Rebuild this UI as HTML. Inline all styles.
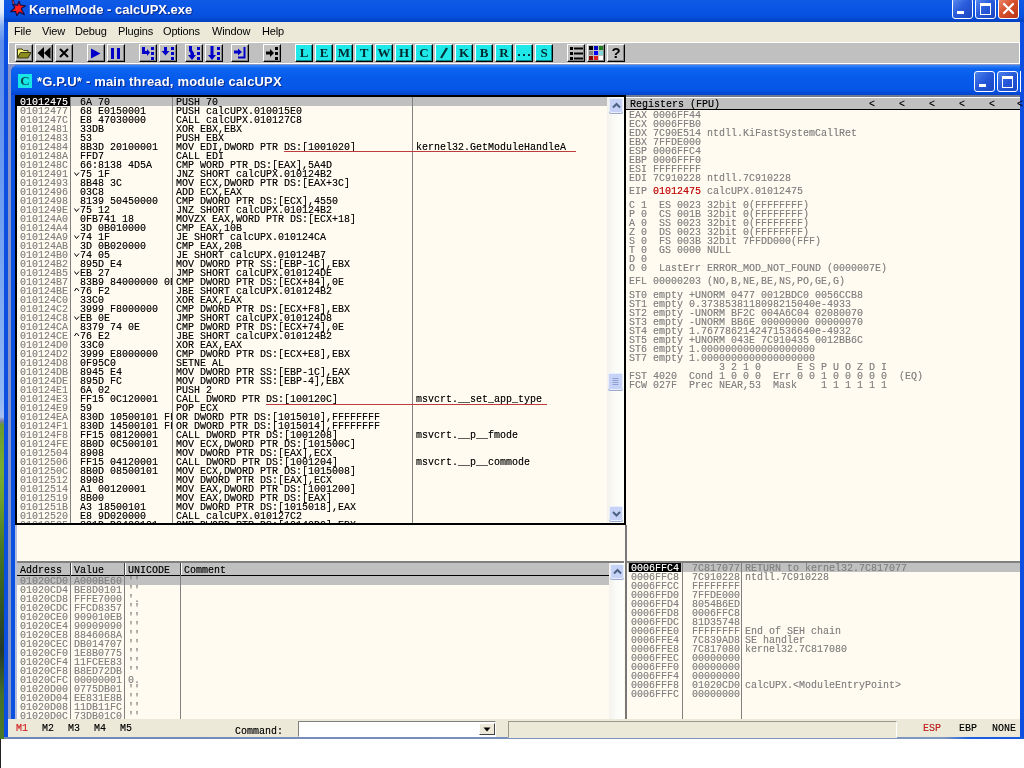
<!DOCTYPE html>
<html><head><meta charset="utf-8"><title>KernelMode - calcUPX.exe</title>
<style>
html,body{margin:0;padding:0;}
body{width:1024px;height:768px;overflow:hidden;position:relative;background:#fff;font-family:"Liberation Sans",sans-serif;}
.a{position:absolute;}
.m{position:absolute;margin-top:1px;font-family:"Liberation Mono",monospace;font-size:10px;line-height:9px;height:9px;white-space:pre;color:#000;letter-spacing:0;text-shadow:0 0 0 rgba(0,0,0,.45);}
.g{color:#808080;text-shadow:0 0 0 rgba(128,128,128,.45);}
.pane{position:absolute;background:#fffbf0;overflow:hidden;}
.tb{position:absolute;top:44px;width:16px;height:16px;background:#c0c0c0;border:1px solid;border-color:#fff #000 #000 #fff;box-shadow:inset -1px -1px 0 #808080;}
.cb{position:absolute;top:44px;width:16px;height:16px;background:#1ee8e8;border:1px solid;border-color:#fff #000 #000 #fff;box-shadow:inset -1px -1px 0 #0a8a8a;font-family:"Liberation Serif",serif;font-weight:bold;font-size:13px;line-height:16px;text-align:center;color:#00282e;}
.menu{position:absolute;top:25px;font-size:11px;line-height:13px;color:#000;letter-spacing:-0.15px;}
.sb{position:absolute;width:17px;background:linear-gradient(90deg,#f3f2ec 0%,#fbfbf8 50%,#fefefc 100%);}
.sbb{position:absolute;box-sizing:border-box;left:2px;width:14px;height:15px;background:#c6d3f7;border:1px solid #e8eefc;border-radius:2px;box-shadow:0 1px 0 #9aa9cf;}
.xb{position:absolute;width:19px;height:19px;border:1px solid #fff;border-radius:3px;background:linear-gradient(135deg,#4d83ec 0%,#2456d8 50%,#1b48c4 100%);}
b{font-weight:normal;color:#c00808;text-shadow:0 0 0 rgba(192,8,8,.6);}
</style></head><body><div id="root" style="position:absolute;left:0;top:0;width:1024px;height:768px;will-change:transform;">

<div class="a" style="left:0;top:0;width:4px;height:739px;background:linear-gradient(180deg,#eef3fb 0px,#e2ebfa 12px,#86aef2 26px,#5c8cec 42px,#6a9af0 180px,#92b8f4 400px,#a6bef0 417px,#7a7cac 421px,#6a9a30 425px,#78ae30 470px,#6fa02c 500px,#4a7a24 545px,#355a20 600px,#24382a 650px,#44702a 695px,#4a7a28 739px);"></div>
<div class="a" style="left:1px;top:739px;width:1023px;height:29px;background:#fff;"></div>
<div class="a" style="left:0;top:739px;width:1px;height:29px;background:#222;"></div>
<div class="a" style="left:4px;top:0;width:1020px;height:739px;background:#0c4fe0;"></div>
<div class="a" style="left:4px;top:0;width:1020px;height:22px;background:linear-gradient(180deg,#0f5ae6 0%,#0a55e4 40%,#0650dd 75%,#0340c0 100%);"></div>
<svg class="a" style="left:8px;top:0" width="20" height="18" viewBox="8 0 20 18"><g stroke="#16104a" stroke-width="1.2" stroke-linejoin="round"><path d="M19 1.2 L20.4 5 L25.6 5.8 L21.2 8.5 L24.3 14.6 L19.5 12.2 L16.8 15.6 L15.6 11.6 L10.4 11.6 L14.8 7.8 L13 4.6 L17.4 5.2 Z" fill="#ee1a1a"/><path d="M12.8 0.8 L13.6 3.8" stroke-width="2.2" stroke-linecap="round"/></g><path d="M12.9 1 L13.5 3.6" stroke="#e04050" stroke-width="1" stroke-linecap="round"/><circle cx="18" cy="8.5" r="2.6" fill="#ff2222"/></svg>
<div class="a" style="left:29px;top:2px;font-weight:bold;font-size:13px;line-height:16px;color:#fff;text-shadow:1px 1px 0 #0a2a8a;white-space:pre;">KernelMode - calcUPX.exe</div>
<div class="xb" style="left:952px;top:-2px;background:linear-gradient(135deg,#5a8cf0 0%,#2a5cdc 45%,#1a44c0 100%);">
<div class="a" style="left:4px;top:12px;width:7px;height:3px;background:#fff;"></div>
</div>
<div class="xb" style="left:975px;top:-2px;background:linear-gradient(135deg,#5a8cf0 0%,#2a5cdc 45%,#1a44c0 100%);">
<div class="a" style="left:4px;top:4px;width:9px;height:8px;border:1px solid #fff;border-top-width:3px;box-sizing:content-box;"></div>
</div>
<div class="xb" style="left:998px;top:-2px;background:linear-gradient(135deg,#e88a6a 0%,#d8502c 45%,#b8351a 100%);">
<svg class="a" style="left:3px;top:3px" width="13" height="13" viewBox="0 0 13 13"><path d="M2 2 L11 11 M11 2 L2 11" stroke="#fff" stroke-width="2.2" stroke-linecap="round"/></svg>
</div>
<div class="a" style="left:8px;top:22px;width:1012px;height:20px;background:#ece9d8;"></div>
<div class="menu" style="left:14px;">File</div>
<div class="menu" style="left:42px;">View</div>
<div class="menu" style="left:75px;">Debug</div>
<div class="menu" style="left:118px;">Plugins</div>
<div class="menu" style="left:163px;">Options</div>
<div class="menu" style="left:212px;">Window</div>
<div class="menu" style="left:262px;">Help</div>
<div class="a" style="left:8px;top:42px;width:1012px;height:22px;background:#fff;"></div>
<div class="a" style="left:9px;top:43px;width:1010px;height:20px;background:#c0c0c0;"></div>
<div class="tb" style="left:15px;"><svg class="a" style="left:0;top:0" width="16" height="16" viewBox="0 0 16 16"><path d="M1.5 13 V4 H6 L7.5 5.5 H12 V7" fill="#f6f07a" stroke="#3a3a10" stroke-width="1"/><path d="M1.5 13 L4.5 7.5 H15 L12 13 Z" fill="#8c8c1e" stroke="#3a3a10" stroke-width="1"/></svg></div>
<div class="tb" style="left:35px;"><svg class="a" style="left:0;top:0" width="16" height="16" viewBox="0 0 16 16"><path d="M8 2 V14 L1.5 8 Z M14.5 2 V14 L8 8 Z" fill="#000"/></svg></div>
<div class="tb" style="left:55px;"><svg class="a" style="left:0;top:0" width="16" height="16" viewBox="0 0 16 16"><path d="M4 4 L12 12 M12 4 L4 12" stroke="#000" stroke-width="2"/></svg></div>
<div class="tb" style="left:87px;"><svg class="a" style="left:0;top:0" width="16" height="16" viewBox="0 0 16 16"><path d="M3 3.5 L12.5 8.5 L3 13.5 Z" fill="#0000c8"/></svg></div>
<div class="tb" style="left:107px;"><svg class="a" style="left:0;top:0" width="16" height="16" viewBox="0 0 16 16"><rect x="3" y="3" width="3" height="11" fill="#0000c8"/><rect x="9" y="3" width="3" height="11" fill="#0000c8"/></svg></div>
<div class="tb" style="left:139px;"><svg class="a" style="left:0;top:0" width="16" height="16" viewBox="0 0 16 16"><path d="M2 2 H5 V6 H7 V4 L10 7.5 L7 11 V9 H2 Z" fill="#0000c8"/><rect x="11" y="2" width="3" height="3" fill="#0000c8"/><rect x="11" y="7" width="3" height="3" fill="#0000c8"/><rect x="11" y="12" width="3" height="3" fill="#0000c8"/></svg></div>
<div class="tb" style="left:159px;"><svg class="a" style="left:0;top:0" width="16" height="16" viewBox="0 0 16 16"><path d="M4 2 H7 V6 H9.5 L5.5 10.5 L1.5 6 H4 Z" fill="#0000c8"/><rect x="11" y="2" width="3" height="3" fill="#0000c8"/><rect x="11" y="7" width="3" height="3" fill="#0000c8"/><rect x="11" y="12" width="3" height="3" fill="#0000c8"/></svg></div>
<div class="tb" style="left:185px;"><svg class="a" style="left:0;top:0" width="16" height="16" viewBox="0 0 16 16"><path d="M3 1 H6 V5 L8 8 V10 H10 L6 15 L2 10 H4.5 V8 L3 6 Z" fill="#0000c8"/><rect x="11" y="2" width="3" height="3" fill="#0000c8"/><rect x="11" y="7" width="3" height="3" fill="#0000c8"/><rect x="11" y="12" width="3" height="3" fill="#0000c8"/></svg></div>
<div class="tb" style="left:205px;"><svg class="a" style="left:0;top:0" width="16" height="16" viewBox="0 0 16 16"><path d="M4.5 1 H7.5 V10 H10 L6 15 L2 10 H4.5 Z" fill="#0000c8"/><rect x="11" y="2" width="3" height="3" fill="#0000c8"/><rect x="11" y="7" width="3" height="3" fill="#0000c8"/><rect x="11" y="12" width="3" height="3" fill="#0000c8"/></svg></div>
<div class="tb" style="left:231px;"><svg class="a" style="left:0;top:0" width="16" height="16" viewBox="0 0 16 16"><path d="M2 5.5 H6 V3.5 L10 7 L6 10.5 V8.5 H2 Z" fill="#0000c8"/><path d="M12.5 2 V12.5 H6" fill="none" stroke="#0000c8" stroke-width="2"/></svg></div>
<div class="tb" style="left:263px;"><svg class="a" style="left:0;top:0" width="16" height="16" viewBox="0 0 16 16"><path d="M2 6.5 H6 V4 L10 8 L6 12 V9.5 H2 Z" fill="#000"/><rect x="11" y="2" width="3" height="3" fill="#000"/><rect x="11" y="7" width="3" height="3" fill="#000"/><rect x="11" y="12" width="3" height="3" fill="#000"/></svg></div>
<div class="cb" style="left:295px;">L</div>
<div class="cb" style="left:315px;">E</div>
<div class="cb" style="left:335px;">M</div>
<div class="cb" style="left:355px;">T</div>
<div class="cb" style="left:375px;">W</div>
<div class="cb" style="left:395px;">H</div>
<div class="cb" style="left:415px;">C</div>
<div class="cb" style="left:435px;"><svg class="a" style="left:0;top:0" width="16" height="16"><path d="M5 13 L11 3" stroke="#00343a" stroke-width="2.2"/></svg></div>
<div class="cb" style="left:455px;">K</div>
<div class="cb" style="left:475px;">B</div>
<div class="cb" style="left:495px;">R</div>
<div class="cb" style="left:515px;"><svg class="a" style="left:0;top:0" width="16" height="16"><rect x="2" y="9" width="2" height="2" fill="#00343a"/><rect x="7" y="9" width="2" height="2" fill="#00343a"/><rect x="12" y="9" width="2" height="2" fill="#00343a"/></svg></div>
<div class="cb" style="left:535px;">S</div>
<div class="tb" style="left:567px;"><svg class="a" style="left:0;top:0" width="16" height="16" viewBox="0 0 16 16"><rect x="2" y="2" width="3" height="3" fill="#000"/><rect x="2" y="7" width="3" height="3" fill="#000"/><rect x="2" y="12" width="3" height="3" fill="#000"/><rect x="6" y="2.5" width="9" height="2" fill="#000"/><rect x="6" y="7.5" width="9" height="2" fill="#000"/><rect x="6" y="12.5" width="9" height="2" fill="#000"/></svg></div>
<div class="tb" style="left:587px;"><svg class="a" style="left:0;top:0" width="16" height="16" viewBox="0 0 16 16"><rect x="1" y="1" width="4" height="4" fill="#000"/><rect x="6" y="1" width="4" height="4" fill="#0000c0"/><rect x="11" y="1" width="4" height="4" fill="#208020"/><rect x="1" y="6" width="4" height="4" fill="#808080"/><rect x="6" y="6" width="4" height="4" fill="#0000ff"/><rect x="11" y="6" width="4" height="4" fill="#7fd8d8"/><rect x="1" y="11" width="4" height="4" fill="#800000"/><rect x="6" y="11" width="4" height="4" fill="#e02020"/><rect x="11" y="11" width="4" height="4" fill="#ffffff"/></svg></div>
<div class="tb" style="left:607px;font-weight:bold;font-size:15px;line-height:16px;text-align:center;color:#000;">?</div>
<div class="a" style="left:8px;top:64px;width:1012px;height:655px;background:#8a96c8;"></div>
<div class="a" style="left:11px;top:65px;width:1009px;height:654px;background:#0c50e0;border-radius:7px 0 0 0;"></div>
<div class="a" style="left:11px;top:65px;width:1009px;height:30px;border-radius:7px 0 0 0;background:linear-gradient(180deg,#3a88f8 0%,#0c64f0 12%,#065aea 50%,#0556e6 82%,#0344cc 100%);"></div>
<div class="a" style="left:18px;top:74px;width:14px;height:14px;background:#18e6e6;font-family:'Liberation Serif',serif;font-weight:bold;font-size:13px;line-height:14px;text-align:center;color:#064a52;">C</div>
<div class="a" style="left:37px;top:74px;font-weight:bold;font-size:13px;line-height:16px;letter-spacing:0.18px;color:#fff;text-shadow:1px 1px 0 #0a2a8a;white-space:pre;">*G.P.U* - main thread, module calcUPX</div>
<div class="xb" style="left:974px;top:71px;">
<div class="a" style="left:4px;top:12px;width:7px;height:3px;background:#fff;"></div>
</div>
<div class="xb" style="left:997px;top:71px;">
<div class="a" style="left:4px;top:4px;width:9px;height:8px;border:1px solid #fff;border-top-width:3px;"></div>
</div>
<div class="a" style="left:1020px;top:71px;width:1px;height:21px;background:#fff;"></div>
<div class="a" style="left:15px;top:95px;width:1005px;height:624px;background:#fffbf0;"></div>
<div class="a" style="left:15px;top:95px;width:611px;height:430px;background:#000;"></div>
<div class="pane" style="left:17px;top:97px;width:607px;height:426px;">
<div class="a" style="left:0;top:0;width:590px;height:9px;background:#c0c0c0;"></div>
<div class="a" style="left:0;top:0;width:53px;height:9px;background:#000;"></div>
<div class="a" style="left:53px;top:0;width:1px;height:426px;background:#808080;"></div>
<div class="a" style="left:155px;top:0;width:1px;height:426px;background:#808080;"></div>
<div class="a" style="left:395px;top:0;width:1px;height:426px;background:#808080;"></div>
<div class="m" style="left:3px;top:0px;color:#fff;text-shadow:0 0 0 rgba(255,255,255,.45);">01012475</div>
<div class="m" style="left:63px;top:0px;width:92px;overflow:hidden;">6A 70</div>
<div class="m" style="left:159px;top:0px;">PUSH 70</div>
<div class="m g" style="left:3px;top:9px;">01012477</div>
<div class="m" style="left:63px;top:9px;width:92px;overflow:hidden;">68 E0150001</div>
<div class="m" style="left:159px;top:9px;">PUSH calcUPX.010015E0</div>
<div class="m g" style="left:3px;top:18px;">0101247C</div>
<div class="m" style="left:63px;top:18px;width:92px;overflow:hidden;">E8 47030000</div>
<div class="m" style="left:159px;top:18px;">CALL calcUPX.010127C8</div>
<div class="m g" style="left:3px;top:27px;">01012481</div>
<div class="m" style="left:63px;top:27px;width:92px;overflow:hidden;">33DB</div>
<div class="m" style="left:159px;top:27px;">XOR EBX,EBX</div>
<div class="m g" style="left:3px;top:36px;">01012483</div>
<div class="m" style="left:63px;top:36px;width:92px;overflow:hidden;">53</div>
<div class="m" style="left:159px;top:36px;">PUSH EBX</div>
<div class="m g" style="left:3px;top:45px;">01012484</div>
<div class="m" style="left:63px;top:45px;width:92px;overflow:hidden;">8B3D 20100001</div>
<div class="m" style="left:159px;top:45px;">MOV EDI,DWORD PTR DS:[1001020]</div>
<div class="m" style="left:399px;top:45px;">kernel32.GetModuleHandleA</div>
<div class="m g" style="left:3px;top:54px;">0101248A</div>
<div class="m" style="left:63px;top:54px;width:92px;overflow:hidden;">FFD7</div>
<div class="m" style="left:159px;top:54px;">CALL EDI</div>
<div class="m g" style="left:3px;top:63px;">0101248C</div>
<div class="m" style="left:63px;top:63px;width:92px;overflow:hidden;">66:8138 4D5A</div>
<div class="m" style="left:159px;top:63px;">CMP WORD PTR DS:[EAX],5A4D</div>
<div class="m g" style="left:3px;top:72px;">01012491</div>
<svg class="a" style="left:57px;top:72px" width="6" height="9"><path d="M0.5 3.5 L2.5 6.5 L5 3.5" fill="none" stroke="#000" stroke-width="1"/></svg>
<div class="m" style="left:63px;top:72px;width:92px;overflow:hidden;">75 1F</div>
<div class="m" style="left:159px;top:72px;">JNZ SHORT calcUPX.010124B2</div>
<div class="m g" style="left:3px;top:81px;">01012493</div>
<div class="m" style="left:63px;top:81px;width:92px;overflow:hidden;">8B48 3C</div>
<div class="m" style="left:159px;top:81px;">MOV ECX,DWORD PTR DS:[EAX+3C]</div>
<div class="m g" style="left:3px;top:90px;">01012496</div>
<div class="m" style="left:63px;top:90px;width:92px;overflow:hidden;">03C8</div>
<div class="m" style="left:159px;top:90px;">ADD ECX,EAX</div>
<div class="m g" style="left:3px;top:99px;">01012498</div>
<div class="m" style="left:63px;top:99px;width:92px;overflow:hidden;">8139 50450000</div>
<div class="m" style="left:159px;top:99px;">CMP DWORD PTR DS:[ECX],4550</div>
<div class="m g" style="left:3px;top:108px;">0101249E</div>
<svg class="a" style="left:57px;top:108px" width="6" height="9"><path d="M0.5 3.5 L2.5 6.5 L5 3.5" fill="none" stroke="#000" stroke-width="1"/></svg>
<div class="m" style="left:63px;top:108px;width:92px;overflow:hidden;">75 12</div>
<div class="m" style="left:159px;top:108px;">JNZ SHORT calcUPX.010124B2</div>
<div class="m g" style="left:3px;top:117px;">010124A0</div>
<div class="m" style="left:63px;top:117px;width:92px;overflow:hidden;">0FB741 18</div>
<div class="m" style="left:159px;top:117px;">MOVZX EAX,WORD PTR DS:[ECX+18]</div>
<div class="m g" style="left:3px;top:126px;">010124A4</div>
<div class="m" style="left:63px;top:126px;width:92px;overflow:hidden;">3D 0B010000</div>
<div class="m" style="left:159px;top:126px;">CMP EAX,10B</div>
<div class="m g" style="left:3px;top:135px;">010124A9</div>
<svg class="a" style="left:57px;top:135px" width="6" height="9"><path d="M0.5 3.5 L2.5 6.5 L5 3.5" fill="none" stroke="#000" stroke-width="1"/></svg>
<div class="m" style="left:63px;top:135px;width:92px;overflow:hidden;">74 1F</div>
<div class="m" style="left:159px;top:135px;">JE SHORT calcUPX.010124CA</div>
<div class="m g" style="left:3px;top:144px;">010124AB</div>
<div class="m" style="left:63px;top:144px;width:92px;overflow:hidden;">3D 0B020000</div>
<div class="m" style="left:159px;top:144px;">CMP EAX,20B</div>
<div class="m g" style="left:3px;top:153px;">010124B0</div>
<svg class="a" style="left:57px;top:153px" width="6" height="9"><path d="M0.5 3.5 L2.5 6.5 L5 3.5" fill="none" stroke="#000" stroke-width="1"/></svg>
<div class="m" style="left:63px;top:153px;width:92px;overflow:hidden;">74 05</div>
<div class="m" style="left:159px;top:153px;">JE SHORT calcUPX.010124B7</div>
<div class="m g" style="left:3px;top:162px;">010124B2</div>
<div class="m" style="left:63px;top:162px;width:92px;overflow:hidden;">895D E4</div>
<div class="m" style="left:159px;top:162px;">MOV DWORD PTR SS:[EBP-1C],EBX</div>
<div class="m g" style="left:3px;top:171px;">010124B5</div>
<svg class="a" style="left:57px;top:171px" width="6" height="9"><path d="M0.5 3.5 L2.5 6.5 L5 3.5" fill="none" stroke="#000" stroke-width="1"/></svg>
<div class="m" style="left:63px;top:171px;width:92px;overflow:hidden;">EB 27</div>
<div class="m" style="left:159px;top:171px;">JMP SHORT calcUPX.010124DE</div>
<div class="m g" style="left:3px;top:180px;">010124B7</div>
<div class="m" style="left:63px;top:180px;width:92px;overflow:hidden;">83B9 84000000 0E</div>
<div class="m" style="left:159px;top:180px;">CMP DWORD PTR DS:[ECX+84],0E</div>
<div class="m g" style="left:3px;top:189px;">010124BE</div>
<svg class="a" style="left:57px;top:189px" width="6" height="9"><path d="M0.5 5 L2.5 2 L5 5" fill="none" stroke="#000" stroke-width="1"/></svg>
<div class="m" style="left:63px;top:189px;width:92px;overflow:hidden;">76 F2</div>
<div class="m" style="left:159px;top:189px;">JBE SHORT calcUPX.010124B2</div>
<div class="m g" style="left:3px;top:198px;">010124C0</div>
<div class="m" style="left:63px;top:198px;width:92px;overflow:hidden;">33C0</div>
<div class="m" style="left:159px;top:198px;">XOR EAX,EAX</div>
<div class="m g" style="left:3px;top:207px;">010124C2</div>
<div class="m" style="left:63px;top:207px;width:92px;overflow:hidden;">3999 F8000000</div>
<div class="m" style="left:159px;top:207px;">CMP DWORD PTR DS:[ECX+F8],EBX</div>
<div class="m g" style="left:3px;top:216px;">010124C8</div>
<svg class="a" style="left:57px;top:216px" width="6" height="9"><path d="M0.5 3.5 L2.5 6.5 L5 3.5" fill="none" stroke="#000" stroke-width="1"/></svg>
<div class="m" style="left:63px;top:216px;width:92px;overflow:hidden;">EB 0E</div>
<div class="m" style="left:159px;top:216px;">JMP SHORT calcUPX.010124D8</div>
<div class="m g" style="left:3px;top:225px;">010124CA</div>
<div class="m" style="left:63px;top:225px;width:92px;overflow:hidden;">8379 74 0E</div>
<div class="m" style="left:159px;top:225px;">CMP DWORD PTR DS:[ECX+74],0E</div>
<div class="m g" style="left:3px;top:234px;">010124CE</div>
<svg class="a" style="left:57px;top:234px" width="6" height="9"><path d="M0.5 5 L2.5 2 L5 5" fill="none" stroke="#000" stroke-width="1"/></svg>
<div class="m" style="left:63px;top:234px;width:92px;overflow:hidden;">76 E2</div>
<div class="m" style="left:159px;top:234px;">JBE SHORT calcUPX.010124B2</div>
<div class="m g" style="left:3px;top:243px;">010124D0</div>
<div class="m" style="left:63px;top:243px;width:92px;overflow:hidden;">33C0</div>
<div class="m" style="left:159px;top:243px;">XOR EAX,EAX</div>
<div class="m g" style="left:3px;top:252px;">010124D2</div>
<div class="m" style="left:63px;top:252px;width:92px;overflow:hidden;">3999 E8000000</div>
<div class="m" style="left:159px;top:252px;">CMP DWORD PTR DS:[ECX+E8],EBX</div>
<div class="m g" style="left:3px;top:261px;">010124D8</div>
<div class="m" style="left:63px;top:261px;width:92px;overflow:hidden;">0F95C0</div>
<div class="m" style="left:159px;top:261px;">SETNE AL</div>
<div class="m g" style="left:3px;top:270px;">010124DB</div>
<div class="m" style="left:63px;top:270px;width:92px;overflow:hidden;">8945 E4</div>
<div class="m" style="left:159px;top:270px;">MOV DWORD PTR SS:[EBP-1C],EAX</div>
<div class="m g" style="left:3px;top:279px;">010124DE</div>
<div class="m" style="left:63px;top:279px;width:92px;overflow:hidden;">895D FC</div>
<div class="m" style="left:159px;top:279px;">MOV DWORD PTR SS:[EBP-4],EBX</div>
<div class="m g" style="left:3px;top:288px;">010124E1</div>
<div class="m" style="left:63px;top:288px;width:92px;overflow:hidden;">6A 02</div>
<div class="m" style="left:159px;top:288px;">PUSH 2</div>
<div class="m g" style="left:3px;top:297px;">010124E3</div>
<div class="m" style="left:63px;top:297px;width:92px;overflow:hidden;">FF15 0C120001</div>
<div class="m" style="left:159px;top:297px;">CALL DWORD PTR DS:[100120C]</div>
<div class="m" style="left:399px;top:297px;">msvcrt.__set_app_type</div>
<div class="m g" style="left:3px;top:306px;">010124E9</div>
<div class="m" style="left:63px;top:306px;width:92px;overflow:hidden;">59</div>
<div class="m" style="left:159px;top:306px;">POP ECX</div>
<div class="m g" style="left:3px;top:315px;">010124EA</div>
<div class="m" style="left:63px;top:315px;width:92px;overflow:hidden;">830D 10500101 FF</div>
<div class="m" style="left:159px;top:315px;">OR DWORD PTR DS:[1015010],FFFFFFFF</div>
<div class="m g" style="left:3px;top:324px;">010124F1</div>
<div class="m" style="left:63px;top:324px;width:92px;overflow:hidden;">830D 14500101 FF</div>
<div class="m" style="left:159px;top:324px;">OR DWORD PTR DS:[1015014],FFFFFFFF</div>
<div class="m g" style="left:3px;top:333px;">010124F8</div>
<div class="m" style="left:63px;top:333px;width:92px;overflow:hidden;">FF15 08120001</div>
<div class="m" style="left:159px;top:333px;">CALL DWORD PTR DS:[1001208]</div>
<div class="m" style="left:399px;top:333px;">msvcrt.__p__fmode</div>
<div class="m g" style="left:3px;top:342px;">010124FE</div>
<div class="m" style="left:63px;top:342px;width:92px;overflow:hidden;">8B0D 0C500101</div>
<div class="m" style="left:159px;top:342px;">MOV ECX,DWORD PTR DS:[101500C]</div>
<div class="m g" style="left:3px;top:351px;">01012504</div>
<div class="m" style="left:63px;top:351px;width:92px;overflow:hidden;">8908</div>
<div class="m" style="left:159px;top:351px;">MOV DWORD PTR DS:[EAX],ECX</div>
<div class="m g" style="left:3px;top:360px;">01012506</div>
<div class="m" style="left:63px;top:360px;width:92px;overflow:hidden;">FF15 04120001</div>
<div class="m" style="left:159px;top:360px;">CALL DWORD PTR DS:[1001204]</div>
<div class="m" style="left:399px;top:360px;">msvcrt.__p__commode</div>
<div class="m g" style="left:3px;top:369px;">0101250C</div>
<div class="m" style="left:63px;top:369px;width:92px;overflow:hidden;">8B0D 08500101</div>
<div class="m" style="left:159px;top:369px;">MOV ECX,DWORD PTR DS:[1015008]</div>
<div class="m g" style="left:3px;top:378px;">01012512</div>
<div class="m" style="left:63px;top:378px;width:92px;overflow:hidden;">8908</div>
<div class="m" style="left:159px;top:378px;">MOV DWORD PTR DS:[EAX],ECX</div>
<div class="m g" style="left:3px;top:387px;">01012514</div>
<div class="m" style="left:63px;top:387px;width:92px;overflow:hidden;">A1 00120001</div>
<div class="m" style="left:159px;top:387px;">MOV EAX,DWORD PTR DS:[1001200]</div>
<div class="m g" style="left:3px;top:396px;">01012519</div>
<div class="m" style="left:63px;top:396px;width:92px;overflow:hidden;">8B00</div>
<div class="m" style="left:159px;top:396px;">MOV EAX,DWORD PTR DS:[EAX]</div>
<div class="m g" style="left:3px;top:405px;">0101251B</div>
<div class="m" style="left:63px;top:405px;width:92px;overflow:hidden;">A3 18500101</div>
<div class="m" style="left:159px;top:405px;">MOV DWORD PTR DS:[1015018],EAX</div>
<div class="m g" style="left:3px;top:414px;">01012520</div>
<div class="m" style="left:63px;top:414px;width:92px;overflow:hidden;">E8 9D020000</div>
<div class="m" style="left:159px;top:414px;">CALL calcUPX.010127C2</div>
<div class="m g" style="left:3px;top:423px;">01012525</div>
<div class="m" style="left:63px;top:423px;width:92px;overflow:hidden;">391D D0400101</div>
<div class="m" style="left:159px;top:423px;">CMP DWORD PTR DS:[10140D0],EBX</div>
<div class="a" style="left:267px;top:54px;width:292px;height:1px;background:#bc3c3c;"></div>
<div class="a" style="left:249px;top:307px;width:281px;height:1px;background:#bc3c3c;"></div>
<div class="sb" style="left:590px;top:0;height:426px;"></div>
<div class="sbb" style="left:592px;top:1px;"><svg class="a" style="left:0;top:0" width="13" height="14"><path d="M3 8.5 L6.5 5 L10 8.5" fill="none" stroke="#4d6185" stroke-width="2"/></svg></div>
<div class="sbb" style="left:592px;top:409px;"><svg class="a" style="left:0;top:0" width="13" height="14"><path d="M3 5 L6.5 8.5 L10 5" fill="none" stroke="#4d6185" stroke-width="2"/></svg></div>
<div class="sbb" style="left:591px;top:276px;width:15px;height:17px;"><svg class="a" style="left:0;top:0" width="13" height="16"><path d="M3.5 4.5 H9.5 M3.5 6.5 H9.5 M3.5 8.5 H9.5 M3.5 10.5 H9.5" stroke="#8ea0d6" stroke-width="1"/></svg></div>
</div>
<div class="a" style="left:15px;top:525px;width:2px;height:194px;background:#b4bedc;"></div>
<div class="a" style="left:17px;top:561px;width:607px;height:158px;background:#808080;"></div>
<div class="pane" style="left:17px;top:563px;width:607px;height:156px;">
<div class="a" style="left:0;top:0;width:592px;height:12px;background:#c0c0c0;"></div>
<div class="a" style="left:0;top:12px;width:592px;height:1px;background:#000;"></div>
<div class="a" style="left:0;top:13px;width:592px;height:9px;background:#c0c0c0;"></div>
<div class="a" style="left:53px;top:0;width:1px;height:156px;background:#808080;"></div>
<div class="a" style="left:53px;top:0;width:1px;height:12px;background:#404040;"></div>
<div class="a" style="left:54px;top:0;width:1px;height:12px;background:#fff;"></div>
<div class="a" style="left:107px;top:0;width:1px;height:156px;background:#808080;"></div>
<div class="a" style="left:107px;top:0;width:1px;height:12px;background:#404040;"></div>
<div class="a" style="left:108px;top:0;width:1px;height:12px;background:#fff;"></div>
<div class="a" style="left:163px;top:0;width:1px;height:156px;background:#808080;"></div>
<div class="a" style="left:163px;top:0;width:1px;height:12px;background:#404040;"></div>
<div class="a" style="left:164px;top:0;width:1px;height:12px;background:#fff;"></div>
<div class="m" style="left:3px;top:2px;">Address</div>
<div class="m" style="left:57px;top:2px;">Value</div>
<div class="m" style="left:111px;top:2px;">UNICODE</div>
<div class="m" style="left:167px;top:2px;">Comment</div>
<div class="m g" style="left:3px;top:13px;">01020CD0</div>
<div class="m g" style="left:57px;top:13px;">A000BE60</div>
<div class="m g" style="left:111px;top:13px;">&#x27;&#x27;</div>
<div class="m g" style="left:3px;top:22px;">01020CD4</div>
<div class="m g" style="left:57px;top:22px;">BE8D0101</div>
<div class="m g" style="left:111px;top:22px;">&#x27;&#x27;</div>
<div class="m g" style="left:3px;top:31px;">01020CD8</div>
<div class="m g" style="left:57px;top:31px;">FFFE7000</div>
<div class="m g" style="left:111px;top:31px;">&#x27;.</div>
<div class="m g" style="left:3px;top:40px;">01020CDC</div>
<div class="m g" style="left:57px;top:40px;">FFCD8357</div>
<div class="m g" style="left:111px;top:40px;">&#x27;&#x27;</div>
<div class="m g" style="left:3px;top:49px;">01020CE0</div>
<div class="m g" style="left:57px;top:49px;">909010EB</div>
<div class="m g" style="left:111px;top:49px;">&#x27;&#x27;</div>
<div class="m g" style="left:3px;top:58px;">01020CE4</div>
<div class="m g" style="left:57px;top:58px;">90909090</div>
<div class="m g" style="left:111px;top:58px;">&#x27;&#x27;</div>
<div class="m g" style="left:3px;top:67px;">01020CE8</div>
<div class="m g" style="left:57px;top:67px;">8846068A</div>
<div class="m g" style="left:111px;top:67px;">&#x27;&#x27;</div>
<div class="m g" style="left:3px;top:76px;">01020CEC</div>
<div class="m g" style="left:57px;top:76px;">DB014707</div>
<div class="m g" style="left:111px;top:76px;">&#x27;&#x27;</div>
<div class="m g" style="left:3px;top:85px;">01020CF0</div>
<div class="m g" style="left:57px;top:85px;">1E8B0775</div>
<div class="m g" style="left:111px;top:85px;">&#x27;&#x27;</div>
<div class="m g" style="left:3px;top:94px;">01020CF4</div>
<div class="m g" style="left:57px;top:94px;">11FCEE83</div>
<div class="m g" style="left:111px;top:94px;">&#x27;&#x27;</div>
<div class="m g" style="left:3px;top:103px;">01020CF8</div>
<div class="m g" style="left:57px;top:103px;">B8ED72DB</div>
<div class="m g" style="left:111px;top:103px;">&#x27;&#x27;</div>
<div class="m g" style="left:3px;top:112px;">01020CFC</div>
<div class="m g" style="left:57px;top:112px;">00000001</div>
<div class="m g" style="left:111px;top:112px;">0.</div>
<div class="m g" style="left:3px;top:121px;">01020D00</div>
<div class="m g" style="left:57px;top:121px;">0775DB01</div>
<div class="m g" style="left:111px;top:121px;">&#x27;&#x27;</div>
<div class="m g" style="left:3px;top:130px;">01020D04</div>
<div class="m g" style="left:57px;top:130px;">EE831E8B</div>
<div class="m g" style="left:111px;top:130px;">&#x27;&#x27;</div>
<div class="m g" style="left:3px;top:139px;">01020D08</div>
<div class="m g" style="left:57px;top:139px;">11DB11FC</div>
<div class="m g" style="left:111px;top:139px;">&#x27;&#x27;</div>
<div class="m g" style="left:3px;top:148px;">01020D0C</div>
<div class="m g" style="left:57px;top:148px;">73DB01C0</div>
<div class="m g" style="left:111px;top:148px;">&#x27;&#x27;</div>
<div class="sb" style="left:592px;top:0;width:15px;height:156px;"></div>
<div class="sbb" style="left:593px;top:1px;"><svg class="a" style="left:0;top:0" width="13" height="14"><path d="M3 8.5 L6.5 5 L10 8.5" fill="none" stroke="#4d6185" stroke-width="2"/></svg></div>
</div>
<div class="a" style="left:626px;top:95px;width:394px;height:2px;background:#707890;"></div>
<div class="a" style="left:626px;top:97px;width:394px;height:1px;background:#fff;"></div>
<div class="a" style="left:626px;top:98px;width:394px;height:11px;background:#c0c0c0;"></div>
<div class="a" style="left:626px;top:109px;width:394px;height:1px;background:#000;"></div>
<div class="m" style="left:630px;top:99px;">Registers (FPU)</div>
<div class="m" style="left:869px;top:99px;">&lt;</div>
<div class="m" style="left:899px;top:99px;">&lt;</div>
<div class="m" style="left:929px;top:99px;">&lt;</div>
<div class="m" style="left:959px;top:99px;">&lt;</div>
<div class="m" style="left:989px;top:99px;">&lt;</div>
<div class="m" style="left:1017px;top:99px;">&lt;</div>
<div class="m g" style="left:629px;top:110px;">EAX 0006FF44</div>
<div class="m g" style="left:629px;top:119px;">ECX 0006FFB0</div>
<div class="m g" style="left:629px;top:128px;">EDX 7C90E514 ntdll.KiFastSystemCallRet</div>
<div class="m g" style="left:629px;top:137px;">EBX 7FFDE000</div>
<div class="m g" style="left:629px;top:146px;">ESP 0006FFC4</div>
<div class="m g" style="left:629px;top:155px;">EBP 0006FFF0</div>
<div class="m g" style="left:629px;top:164px;">ESI FFFFFFFF</div>
<div class="m g" style="left:629px;top:173px;">EDI 7C910228 ntdll.7C910228</div>
<div class="m g" style="left:629px;top:186px;">EIP <b>01012475</b> calcUPX.01012475</div>
<div class="m g" style="left:629px;top:200px;">C 1  ES 0023 32bit 0(FFFFFFFF)</div>
<div class="m g" style="left:629px;top:209px;">P 0  CS 001B 32bit 0(FFFFFFFF)</div>
<div class="m g" style="left:629px;top:218px;">A 0  SS 0023 32bit 0(FFFFFFFF)</div>
<div class="m g" style="left:629px;top:227px;">Z 0  DS 0023 32bit 0(FFFFFFFF)</div>
<div class="m g" style="left:629px;top:236px;">S 0  FS 003B 32bit 7FFDD000(FFF)</div>
<div class="m g" style="left:629px;top:245px;">T 0  GS 0000 NULL</div>
<div class="m g" style="left:629px;top:254px;">D 0</div>
<div class="m g" style="left:629px;top:263px;">O 0  LastErr ERROR_MOD_NOT_FOUND (0000007E)</div>
<div class="m g" style="left:629px;top:276px;">EFL 00000203 (NO,B,NE,BE,NS,PO,GE,G)</div>
<div class="m g" style="left:629px;top:290px;">ST0 empty +UNORM 0477 0012BDC0 0056CCB8</div>
<div class="m g" style="left:629px;top:299px;">ST1 empty 0.3738538118098215040e-4933</div>
<div class="m g" style="left:629px;top:308px;">ST2 empty -UNORM BF2C 004A6C04 02080070</div>
<div class="m g" style="left:629px;top:317px;">ST3 empty -UNORM BB6E 00000000 00000070</div>
<div class="m g" style="left:629px;top:326px;">ST4 empty 1.7677862142471536640e-4932</div>
<div class="m g" style="left:629px;top:335px;">ST5 empty +UNORM 043E 7C910435 0012BB6C</div>
<div class="m g" style="left:629px;top:344px;">ST6 empty 1.0000000000000000000</div>
<div class="m g" style="left:629px;top:353px;">ST7 empty 1.0000000000000000000</div>
<div class="m g" style="left:629px;top:362px;">               3 2 1 0      E S P U O Z D I</div>
<div class="m g" style="left:629px;top:371px;">FST 4020  Cond 1 0 0 0  Err 0 0 1 0 0 0 0 0  (EQ)</div>
<div class="m g" style="left:629px;top:380px;">FCW 027F  Prec NEAR,53  Mask    1 1 1 1 1 1</div>
<div class="a" style="left:626px;top:561px;width:394px;height:2px;background:#808080;"></div>
<div class="a" style="left:625px;top:525px;width:2px;height:194px;background:#787878;"></div>
<div class="pane" style="left:628px;top:563px;width:392px;height:156px;">
<div class="a" style="left:0;top:0;width:392px;height:9px;background:#c0c0c0;"></div>
<div class="a" style="left:1px;top:0;width:52px;height:9px;background:#000;"></div>
<div class="a" style="left:54px;top:0;width:1px;height:156px;background:#808080;"></div>
<div class="a" style="left:113px;top:0;width:1px;height:156px;background:#808080;"></div>
<div class="m g" style="left:3px;top:0px;color:#fff;text-shadow:0 0 0 rgba(255,255,255,.45);">0006FFC4</div>
<div class="m g" style="left:64px;top:0px;">7C817077</div>
<div class="m g" style="left:117px;top:0px;">RETURN to kernel32.7C817077</div>
<div class="m g" style="left:3px;top:9px;">0006FFC8</div>
<div class="m g" style="left:64px;top:9px;">7C910228</div>
<div class="m g" style="left:117px;top:9px;">ntdll.7C910228</div>
<div class="m g" style="left:3px;top:18px;">0006FFCC</div>
<div class="m g" style="left:64px;top:18px;">FFFFFFFF</div>
<div class="m g" style="left:3px;top:27px;">0006FFD0</div>
<div class="m g" style="left:64px;top:27px;">7FFDE000</div>
<div class="m g" style="left:3px;top:36px;">0006FFD4</div>
<div class="m g" style="left:64px;top:36px;">8054B6ED</div>
<div class="m g" style="left:3px;top:45px;">0006FFD8</div>
<div class="m g" style="left:64px;top:45px;">0006FFC8</div>
<div class="m g" style="left:3px;top:54px;">0006FFDC</div>
<div class="m g" style="left:64px;top:54px;">81D35748</div>
<div class="m g" style="left:3px;top:63px;">0006FFE0</div>
<div class="m g" style="left:64px;top:63px;">FFFFFFFF</div>
<div class="m g" style="left:117px;top:63px;">End of SEH chain</div>
<div class="m g" style="left:3px;top:72px;">0006FFE4</div>
<div class="m g" style="left:64px;top:72px;">7C839AD8</div>
<div class="m g" style="left:117px;top:72px;">SE handler</div>
<div class="m g" style="left:3px;top:81px;">0006FFE8</div>
<div class="m g" style="left:64px;top:81px;">7C817080</div>
<div class="m g" style="left:117px;top:81px;">kernel32.7C817080</div>
<div class="m g" style="left:3px;top:90px;">0006FFEC</div>
<div class="m g" style="left:64px;top:90px;">00000000</div>
<div class="m g" style="left:3px;top:99px;">0006FFF0</div>
<div class="m g" style="left:64px;top:99px;">00000000</div>
<div class="m g" style="left:3px;top:108px;">0006FFF4</div>
<div class="m g" style="left:64px;top:108px;">00000000</div>
<div class="m g" style="left:3px;top:117px;">0006FFF8</div>
<div class="m g" style="left:64px;top:117px;">01020CD0</div>
<div class="m g" style="left:117px;top:117px;">calcUPX.&lt;ModuleEntryPoint&gt;</div>
<div class="m g" style="left:3px;top:126px;">0006FFFC</div>
<div class="m g" style="left:64px;top:126px;">00000000</div>
</div>
<div class="a" style="left:8px;top:719px;width:1012px;height:18px;background:#ece9d8;"></div>
<div class="a" style="left:4px;top:737px;width:1020px;height:2px;background:linear-gradient(90deg,#7088b8 0px,#8098c0 940px,#1a60e0 965px,#1458dc 1020px);"></div>
<div class="m" style="left:16px;top:723px;color:#d02020;text-shadow:0 0 0 rgba(208,32,32,.45);">M1</div>
<div class="m" style="left:42px;top:723px;">M2</div>
<div class="m" style="left:68px;top:723px;">M3</div>
<div class="m" style="left:94px;top:723px;">M4</div>
<div class="m" style="left:120px;top:723px;">M5</div>
<div class="m" style="left:235px;top:726px;">Command:</div>
<div class="a" style="left:298px;top:721px;width:196px;height:14px;background:#fff;border:1px solid;border-color:#808080 #fff #fff #808080;"></div>
<div class="a" style="left:479px;top:723px;width:14px;height:10px;background:#ece9d8;border:1px solid;border-color:#fff #404040 #404040 #fff;"><svg class="a" style="left:3px;top:3px" width="8" height="5"><path d="M0.5 0.5 H7.5 L4 4.5 Z" fill="#000"/></svg></div>
<div class="a" style="left:508px;top:721px;width:387px;height:15px;border:1px solid;border-color:#9a988c #fff #ece9d8 #9a988c;"></div>
<div class="m" style="left:923px;top:723px;color:#d02020;">ESP</div>
<div class="m" style="left:959px;top:723px;color:#000;">EBP</div>
<div class="m" style="left:992px;top:723px;color:#000;">NONE</div>
</div></body></html>
